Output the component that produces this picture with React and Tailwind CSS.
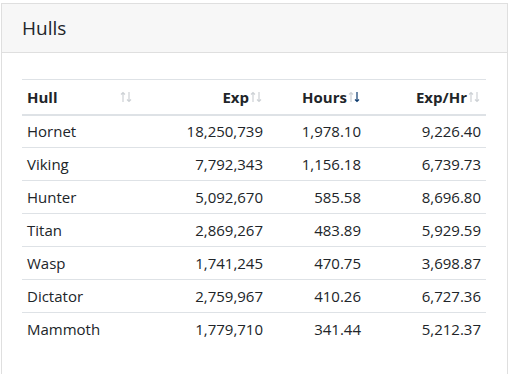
const rows = [
  ['Hornet', '18,250,739', '1,978.10', '9,226.40'],
  ['Viking', '7,792,343', '1,156.18', '6,739.73'],
  ['Hunter', '5,092,670', '585.58', '8,696.80'],
  ['Titan', '2,869,267', '483.89', '5,929.59'],
  ['Wasp', '1,741,245', '470.75', '3,698.87'],
  ['Dictator', '2,759,967', '410.26', '6,727.36'],
  ['Mammoth', '1,779,710', '341.44', '5,212.37'],
];

const SortIcon = ({ active }) => (
  <svg width="14" height="14" viewBox="0 0 14 14" className="shrink-0">
    <path d="M4 12V2.5M2 4.5 4 2.5 6 4.5" fill="none" stroke="#cdd1d5" strokeWidth="1.2" />
    <path d="M10 2v9.5M8 9.5l2 2 2-2" fill="none" stroke={active ? '#0d3b6e' : '#cdd1d5'} strokeWidth="1.2" />
  </svg>
);

export default function App() {
  return (
    <div className="w-[511px] h-[374px] bg-white pt-[3px] pl-px overflow-hidden" style={{ fontFamily: '"Open Sans", sans-serif' }}>
      <div className="w-[507px] h-[400px] border border-[#dfdfdf] text-[#212529]">
        <div className="h-[49px] bg-[#f7f7f7] border-b border-[#dfdfdf] flex items-center px-[20px] pt-px text-[19px]">
          Hulls
        </div>
        <div className="px-[20px] pt-[26px]">
          <table className="w-[464px] border-collapse text-[15px] table-fixed">
            <colgroup>
              <col className="w-[116px]" />
              <col className="w-[130px]" />
              <col className="w-[98px]" />
              <col className="w-[120px]" />
            </colgroup>
            <thead>
              <tr className="border-t border-[#dee2e6] border-b-2 h-[35px]">
                <th className="px-[5px] text-left font-bold">
                  <div className="flex items-center justify-between">
                    <span>Hull</span>
                    <SortIcon />
                  </div>
                </th>
                <th className="px-[5px] font-bold">
                  <div className="flex items-center justify-end">
                    <span>Exp</span>
                    <SortIcon />
                  </div>
                </th>
                <th className="px-[5px] font-bold">
                  <div className="flex items-center justify-end">
                    <span>Hours</span>
                    <SortIcon active />
                  </div>
                </th>
                <th className="px-[5px] font-bold">
                  <div className="flex items-center justify-end">
                    <span>Exp/Hr</span>
                    <SortIcon />
                  </div>
                </th>
              </tr>
            </thead>
            <tbody>
              {rows.map((r, i) => (
                <tr key={r[0]} className={`h-[33px] ${i < rows.length - 1 ? 'border-b border-[#dee2e6]' : ''}`}>
                  <td className="px-[5px] text-left">{r[0]}</td>
                  <td className="px-[5px] text-right">{r[1]}</td>
                  <td className="px-[5px] text-right">{r[2]}</td>
                  <td className="px-[5px] text-right">{r[3]}</td>
                </tr>
              ))}
            </tbody>
          </table>
        </div>
      </div>
    </div>
  );
}
